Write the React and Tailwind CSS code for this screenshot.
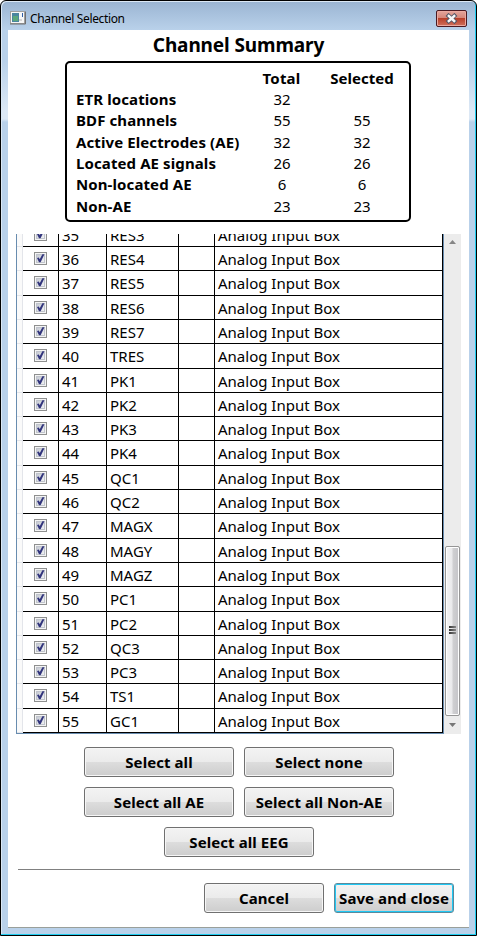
const lineAt = (k) => Math.round(246 + 24.3 * k);

const channels = [
  'RES3', 'RES4', 'RES5', 'RES6', 'RES7', 'TRES', 'PK1', 'PK2', 'PK3', 'PK4', 'QC1',
  'QC2', 'MAGX', 'MAGY', 'MAGZ', 'PC1', 'PC2', 'QC3', 'PC3', 'TS1', 'GC1',
].map((name, i) => ({
  id: 35 + i,
  name,
  height: i === 0 ? 24 : lineAt(i) - lineAt(i - 1),
}));

const summary = [
  ['ETR locations', '32', ''],
  ['BDF channels', '55', '55'],
  ['Active Electrodes (AE)', '32', '32'],
  ['Located AE signals', '26', '26'],
  ['Non-located AE', '6', '6'],
  ['Non-AE', '23', '23'],
];

function Checkbox() {
  return (
    <svg width="13" height="13" viewBox="0 0 13 13" className="block">
      <defs>
        <linearGradient id="box" x1="0" y1="0" x2="1" y2="1">
          <stop offset="0" stopColor="#c3c7d0" />
          <stop offset="1" stopColor="#f3f4f6" />
        </linearGradient>
      </defs>
      <rect x=".5" y=".5" width="12" height="12" fill="#f4f4f4" stroke="#8e8f8f" />
      <rect x="2.5" y="2.5" width="8" height="8" fill="url(#box)" stroke="#c0c4cc" />
      <path d="M3 6 L4.9 5.6 L5.7 7.2 L8.4 2.2 L10.4 2.2 L6.6 10.2 L5 10.2 Z" fill="#31347c" />
    </svg>
  );
}

function Button({ children, className = '', focused }) {
  return (
    <button
      className={`flex h-[30px] items-center justify-center whitespace-nowrap rounded-[3px] border bg-[linear-gradient(#f3f3f3_0%,#ebebeb_50%,#dddddd_50%,#cdcdcd_100%)] pb-px text-[15px] font-bold leading-5 tracking-[0.07px] ${focused ? 'border-[#5a8a9c] shadow-[inset_0_0_0_1px_#1fc8f4]' : 'border-[#707070] shadow-[inset_0_0_0_1px_#f6f6f6]'} ${className}`}
    >
      {children}
    </button>
  );
}

function TitleBar() {
  return (
    <div className="flex h-[27px] shrink-0 items-center pl-[2px] pr-[2px]">
      <svg width="16" height="14" viewBox="0 0 16 14" className="mt-[2px]">
        <rect x=".5" y=".5" width="14" height="12" fill="#f7f7f7" stroke="#a0a0a0" />
        <path d="M0 13 H15.5 V0.5" fill="none" stroke="#707070" />
        <rect x="2" y="2" width="7" height="9" fill="#4a86a0" />
        <rect x="3" y="5" width="5" height="5" fill="#5ba77c" />
        <rect x="12" y="2" width="1" height="4" fill="#2f5fa8" />
        <rect x="9" y="8" width="3" height="2" fill="#d5d5d5" />
      </svg>
      <span className="ml-[4px] mt-[5px] text-[12px] leading-4 tracking-[-0.35px]">Channel Selection</span>
      <div className="ml-auto mt-[4px] flex h-[17px] w-[31px] items-center justify-center rounded-[2px] border border-[#4a1a22] bg-[linear-gradient(#e3a59c_0%,#d58578_48%,#b8402a_50%,#d0705c_100%)] shadow-[inset_0_0_0_1px_#eba99f]">
        <svg width="13" height="11" viewBox="0 0 13 11">
          <path d="M3.6 2.8 L9.4 8.2 M9.4 2.8 L3.6 8.2" stroke="#535666" strokeWidth="4.2" strokeLinecap="square" />
          <path d="M3.8 3 L9.2 8 M9.2 3 L3.8 8" stroke="#f7f7f7" strokeWidth="2.4" strokeLinecap="square" />
        </svg>
      </div>
    </div>
  );
}

export default function App() {
  return (
    <div className="flex h-[936px] w-[477px] flex-col overflow-hidden rounded-t-[6px] border border-black bg-[linear-gradient(#9ab4d2_0px,#b9d1ea_29px,#b9d1ea_60px,#dce8f5_110px,#dce8f5_118px,#b9d1ea_121px,#b9d1ea_100%)] pb-[7px] pl-[7px] pr-[7px] pt-[2px] font-['Noto_Sans','Open_Sans',sans-serif] text-black shadow-[inset_-1px_-1px_0_#1fcdf0,inset_1px_1px_0_#dbe8f5]">
      <TitleBar />
      <div className="flex w-[461px] grow flex-col border-b border-[#9a9f9a] bg-white">
        <h1 className="mt-[2px] text-center text-[19px] font-bold leading-[27px] tracking-[-0.12px]">Channel Summary</h1>
        <div className="ml-[57px] mt-[2px] flex h-[161px] w-[346px] flex-col rounded-[5px] border-2 border-black pl-[9px] pt-[4px] text-[15px]">
          <div className="grid h-[22px] grid-cols-[165px_81px_80px] items-center font-bold">
            <span />
            <span className="text-center tracking-[0.2px]">Total</span>
            <span className="text-center">Selected</span>
          </div>
          {summary.map(([label, total, selected]) => (
            <div key={label} className="grid h-[21.3px] grid-cols-[166px_80px_80px] items-center whitespace-nowrap leading-[21px]">
              <span className="font-bold tracking-[0.1px]">{label}</span>
              <span className="text-center">{total}</span>
              <span className="text-center">{selected}</span>
            </div>
          ))}
        </div>
        <div className="ml-[8px] mt-[12px] flex h-[500px] w-[445px]">
          <div className="flex w-[428px] flex-col justify-end overflow-hidden border-b border-l border-r border-[#688caf]">
            {channels.map((c) => (
              <div key={c.id} className="flex shrink-0 text-[15px]" style={{ height: c.height }}>
                <div className="w-[6px] border-b border-r border-[#e3e5ea] bg-[#fafafa]" />
                <div className="flex w-[36px] justify-center border-b border-r border-black pt-[5px]"><Checkbox /></div>
                <div className="w-[48px] border-b border-r border-black pl-[3px] leading-[25px]">{c.id}</div>
                <div className="w-[72px] border-b border-r border-black pl-[3px] leading-[25px]">{c.name}</div>
                <div className="w-[36px] border-b border-r border-black" />
                <div className="w-[228px] border-b border-r border-black pl-[3px] leading-[25px]">Analog Input Box</div>
              </div>
            ))}
          </div>
          <div className="flex w-[17px] flex-col items-center bg-[#ececec]">
            <svg width="17" height="17" viewBox="0 0 17 17"><path d="M5 10 L8.5 6 L12 10 Z" fill="#868686" /></svg>
            <div className="mt-[295px] flex h-[170px] w-[15px] flex-col items-center justify-center gap-px rounded-[2px] border border-[#959595] bg-[linear-gradient(90deg,#f5f5f5_0%,#e9e9eb_48%,#d0d0d2_52%,#c4c4c8_100%)] pb-[2px] shadow-[inset_0_0_0_1px_#ffffff]">
              <div className="h-[2px] w-[7px] bg-[linear-gradient(90deg,#333,#888)]" />
              <div className="h-[2px] w-[7px] bg-[linear-gradient(90deg,#333,#888)]" />
              <div className="h-[2px] w-[7px] bg-[linear-gradient(90deg,#333,#888)]" />
            </div>
            <svg width="17" height="17" viewBox="0 0 17 17"><path d="M5 7 L8.5 11 L12 7 Z" fill="#777" /></svg>
          </div>
        </div>
        <div className="ml-[76px] mt-[13px] grid grid-cols-[150px_150px] gap-[10px]">
          <Button>Select all</Button>
          <Button>Select none</Button>
          <Button>Select all AE</Button>
          <Button>Select all Non-AE</Button>
        </div>
        <Button className="ml-[156px] mt-[10px] w-[150px]">Select all EEG</Button>
        <div className="ml-[10px] mt-[12px] h-px w-[442px] bg-[#808080]" />
        <div className="ml-[196px] mt-[13px] flex gap-[10px]">
          <Button className="w-[120px]">Cancel</Button>
          <Button className="w-[120px]" focused>Save and close</Button>
        </div>
      </div>
    </div>
  );
}
